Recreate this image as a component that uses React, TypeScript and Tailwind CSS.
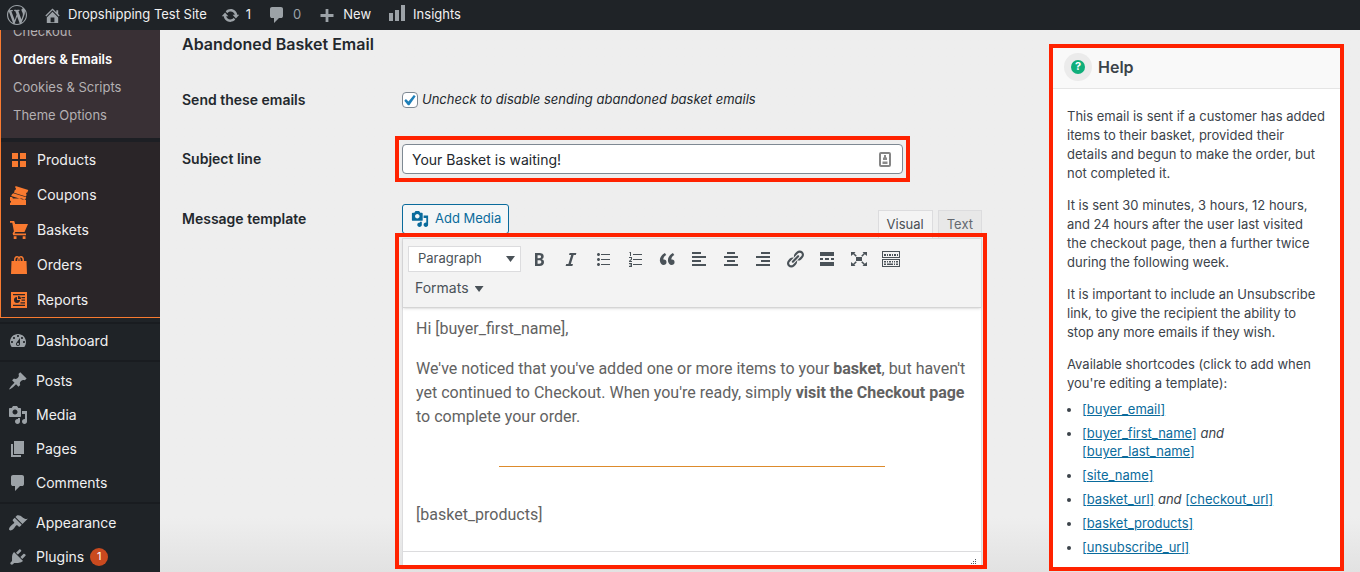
import type { ReactNode } from "react";
import clsx from "clsx";

const paths = {
  wordpress:
    "M20 10c0-5.51-4.49-10-10-10C4.48 0 0 4.49 0 10c0 5.52 4.48 10 10 10 5.51 0 10-4.48 10-10zM7.78 15.37L4.37 6.22c.55-.02 1.17-.08 1.17-.08.5-.06.44-1.13-.06-1.11 0 0-1.45.11-2.37.11-.18 0-.37 0-.58-.01C4.12 2.69 6.87 1.11 10 1.11c2.33 0 4.45.87 6.05 2.34-.68-.11-1.65.39-1.65 1.58 0 .74.45 1.36.9 2.1.35.61.55 1.36.55 2.46 0 1.49-1.4 5-1.4 5l-3.03-8.37c.54-.02.82-.17.82-.17.5-.05.44-1.25-.06-1.22 0 0-1.44.12-2.38.12-.87 0-2.33-.12-2.33-.12-.5-.03-.56 1.2-.06 1.22l.92.08 1.26 3.41zM17.41 10c.24-.64.74-1.87.43-4.25.7 1.29 1.05 2.71 1.05 4.25 0 3.29-1.73 6.24-4.4 7.78.97-2.59 1.94-5.2 2.92-7.78zM6.1 18.09C3.12 16.65 1.11 13.53 1.11 10c0-1.3.23-2.48.72-3.59C3.25 10.3 4.67 14.2 6.1 18.09zm4.03-6.63l2.58 6.98c-.86.29-1.76.45-2.71.45-.79 0-1.57-.11-2.29-.33.81-2.38 1.62-4.74 2.42-7.1z",
  home: "M16 8.5l1.53 1.53-1.06 1.06L10 4.6l-6.47 6.49-1.06-1.06L10 2.5l4 4v-2h2v4zm-6-2.46l6 5.99V18H4v-5.97zM12 17v-5H8v5h4z",
  update:
    "M10.2 3.28c3.53 0 6.43 2.61 6.92 6h2.08l-3.5 4-3.5-4h2.32c-.45-1.97-2.21-3.45-4.32-3.45-1.45 0-2.73.71-3.54 1.78L4.95 5.66C6.23 4.2 8.11 3.28 10.2 3.28zm-.4 13.44c-3.52 0-6.43-2.61-6.92-6H.8l3.5-4c1.17 1.33 2.33 2.67 3.5 4H5.48c.45 1.97 2.21 3.45 4.32 3.45 1.45 0 2.73-.71 3.54-1.78l1.71 1.95c-1.28 1.46-3.15 2.38-5.25 2.38z",
  comments:
    "M5 2h9q.82 0 1.41.59T16 4v7q0 .82-.59 1.41T14 13h-2l-5 5v-5H5q-.82 0-1.41-.59T3 11V4q0-.82.59-1.41T5 2z",
  plus: "M8.6 4h2.8v5.100h5.100v2.800h-5.100V17H8.600v-5.100H3.500V9.100h5.100z",
  bars: "M18 18V2h-4v16h4zm-6 0V7H8v11h4zm-6 0v-8H2v8h4z",
  dashboard:
    "M3.76 16h12.48c1.1-1.37 1.76-3.11 1.76-5 0-4.42-3.58-8-8-8s-8 3.58-8 8c0 1.89.66 3.63 1.76 5zM10 4c.55 0 1 .45 1 1s-.45 1-1 1-1-.45-1-1 .45-1 1-1zM6 6c.55 0 1 .45 1 1s-.45 1-1 1-1-.45-1-1 .45-1 1-1zm8 0c.55 0 1 .45 1 1s-.45 1-1 1-1-.45-1-1 .45-1 1-1zm-5.37 5.55L12 7v6c0 1.1-.9 2-2 2s-2-.9-2-2c0-.57.24-1.08.63-1.45zM4 10c.55 0 1 .45 1 1s-.45 1-1 1-1-.45-1-1 .45-1 1-1zm12 0c.55 0 1 .45 1 1s-.45 1-1 1-1-.45-1-1 .45-1 1-1zm-5 3c0-.55-.45-1-1-1s-1 .45-1 1 .45 1 1 1 1-.45 1-1z",
  post: "M10.44 3.02l1.82-1.82 6.36 6.35-1.83 1.82c-1.05-.68-2.48-.57-3.41.36l-.75.75c-.92.93-1.04 2.35-.35 3.41l-1.83 1.82-2.41-2.41-2.8 2.79c-.42.42-3.38 2.71-3.8 2.29s1.86-3.39 2.28-3.81l2.79-2.79L4.1 9.36l1.83-1.82c1.05.69 2.48.57 3.4-.36l.75-.75c.93-.92 1.05-2.35.36-3.41z",
  media:
    "M13 11V4c0-.55-.45-1-1-1h-1.67L9 1H5L3.67 3H2c-.55 0-1 .45-1 1v7c0 .55.45 1 1 1h10c.55 0 1-.45 1-1zM7 4.5c1.38 0 2.5 1.12 2.5 2.5S8.38 9.5 7 9.5 4.5 8.38 4.5 7 5.62 4.5 7 4.5zM14 6h5v10.5c0 1.38-1.12 2.5-2.5 2.5S14 17.88 14 16.5s1.12-2.5 2.5-2.5c.17 0 .34.02.5.05V9h-3V6zm-4 8.05V13h2v3.5c0 1.38-1.12 2.5-2.5 2.5S7 17.88 7 16.5 8.12 14 9.5 14c.17 0 .34.02.5.05z",
  page: "M6 15V2h10v13H6zm-1 1h8v2H3V5h2v11z",
  appearance:
    "M14.48 11.06L7.41 3.99l1.5-1.5c.5-.56 2.3-.47 3.51.32 1.21.8 1.43 1.28 2.91 2.1 1.18.64 2.45 1.26 4.45.85zm-.71.71L6.7 4.7 4.93 6.47c-.39.39-.39 1.02 0 1.41l1.06 1.06c.39.39.39 1.03 0 1.42-.6.6-1.43 1.11-2.21 1.69-.35.26-.7.53-1.01.84C1.43 14.23.4 16.08 1.4 17.07c.99 1 2.84-.03 4.18-1.36.31-.31.58-.66.85-1.02.57-.78 1.08-1.61 1.69-2.21.39-.39 1.02-.39 1.41 0l1.06 1.06c.39.39 1.02.39 1.41 0z",
  plugins:
    "M13.11 4.36L9.87 7.6 8 5.73l3.24-3.24c.35-.34 1.05-.2 1.56.32.52.51.66 1.21.31 1.55zm-8 1.77l.91-1.12 9.01 9.01-1.19.84c-.71.71-2.63 1.16-3.82 1.16H6.14L4.9 17.26c-.59.59-1.54.59-2.12 0-.59-.58-.59-1.53 0-2.12l1.24-1.24v-3.88c0-1.13.4-3.19 1.09-3.89zm7.26 3.97l3.24-3.24c.34-.35 1.04-.21 1.55.31.52.51.66 1.21.31 1.55l-3.24 3.25z",
  products: "M3 3h6v6H3zM11 3h6v6h-6zM3 11h6v6H3zM11 11h6v6h-6z",
  coupons:
    "M6.5 1l12.8 4-1 2.600-.9.100-.4 1.300.7.700-.8 1.800L5 7.700 5.800 5l.9-.3.300-1.200-.8-.9zM4.300 8.300l12.900 4-1 2.500H14.500L2.200 11.100 3 9.200zM1 12h2l1 1.500h9l2.500 1.500h1.500v5H1v-2l1-.7v-1L1 15.500z",
  cart: "M1 1h4.200l1 3H19l-3.500 8H6.300l-.8 1.600H17V15.200H4.200L3.600 13.500 4.900 11.300 3.300 2.800H1zM4.700 16.200h2.800V19H4.700zM13.700 16.200h2.800V19h-2.800z",
  orders:
    "M5 6V5c0-2.500 1.300-4 3-4 .8 0 1.500.3 2 .8.5-.5 1.200-.8 2-.8 1.700 0 3 1.500 3 4v1h2.500l.5 13H2L2.500 6zM6.500 6h1.700c0-1.600.3-2.500.8-3.300C7.300 2 6.500 3.200 6.500 5zM9.500 6h1c0-1.500-.1-2.200-.5-2.900-.4.700-.5 1.400-.5 2.900zM11.800 6h1.700V5c0-1.800-.9-3-2.500-2.300.5.800.8 1.700.8 3.300z",
  reports:
    "M2 2h16v16H2zM4 4v1.200h12V4zM4 14.800V16h12v-1.200zM8 7a3 3 0 1 0 3 3H8zM9 6v3h3a3 3 0 0 0-3-3zM12.500 7v1.200H16V7zM12.500 9.600v1.200H16V9.600zM11.500 12.200v1.200H16v-1.200z",
  bold: "M6 4v13h4.54c1.37 0 2.46-.33 3.26-1 .8-.66 1.2-1.58 1.2-2.77 0-.84-.17-1.51-.51-2.01s-.9-.85-1.67-1.03v-.09c.57-.1 1.02-.4 1.36-.9s.51-1.13.51-1.91c0-1.14-.39-1.98-1.17-2.5C12.75 4.26 11.5 4 9.78 4H6zm2.57 5.15V6.26h1.36c.73 0 1.27.11 1.61.32.34.22.51.58.51 1.07 0 .54-.16.92-.47 1.15s-.82.35-1.51.35h-1.5zm0 2.19h1.6c1.44 0 2.16.53 2.16 1.61 0 .6-.17 1.05-.51 1.34s-.86.43-1.57.43H8.57v-3.38z",
  italic: "M14.78 6h-2.13l-2.8 9h2.12l-.62 2H4.6l.62-2h2.14l2.8-9H8.03l.62-2h6.75z",
  bullets:
    "M5.5 7C4.67 7 4 6.33 4 5.5 4 4.68 4.67 4 5.5 4 6.32 4 7 4.68 7 5.5 7 6.33 6.32 7 5.5 7zM8 5h9v1H8V5zm-2.500 7c-.83 0-1.500-.67-1.500-1.500C4 9.680 4.670 9 5.500 9c.82 0 1.500.68 1.500 1.500 0 .83-.68 1.500-1.500 1.500zM8 10h9v1H8v-1zm-2.500 7c-.83 0-1.500-.67-1.500-1.500 0-.82.67-1.500 1.500-1.500.82 0 1.500.68 1.500 1.500 0 .83-.68 1.500-1.500 1.500zM8 15h9v1H8v-1z",
  numbers:
    "M5 3h1v4H5V4H4zM8 5h9v1H8zM4 8h3v2.500L5.300 12H7v1H4v-1l2-2V9H4zM8 10h9v1H8zM4 14h3v4H4v-1h2v-.6H4.600v-.8H6V15H4zM8 15h9v1H8z",
  quote:
    "M9.49 13.22c0-.74-.2-1.38-.61-1.9-.62-.78-1.83-.88-2.53-.72-.29-1.65 1.11-3.75 2.92-4.65L7.88 4c-2.73 1.3-5.42 4.28-4.96 8.05C3.21 14.43 4.59 16 6.54 16c.85 0 1.56-.25 2.12-.75s.83-1.18.83-2.03zm8.05 0c0-.74-.2-1.38-.61-1.9-.63-.78-1.83-.88-2.53-.72-.29-1.65 1.11-3.75 2.92-4.65L15.93 4c-2.73 1.3-5.41 4.28-4.95 8.05.29 2.38 1.66 3.95 3.61 3.95.85 0 1.56-.25 2.12-.75s.83-1.18.83-2.03z",
  alignLeft: "M12 5V3H3v2h9zm5 4V7H3v2h14zm-5 4v-2H3v2h9zm5 4v-2H3v2h14z",
  alignCenter: "M14 5V3H6v2h8zm3 4V7H3v2h14zm-3 4v-2H6v2h8zm3 4v-2H3v2h14z",
  alignRight: "M17 5V3H8v2h9zm0 4V7H3v2h14zm0 4v-2H8v2h9zm0 4v-2H3v2h14z",
  link: "M17.74 2.76c1.68 1.69 1.68 4.41 0 6.1l-1.53 1.52c-1.12 1.12-2.7 1.47-4.14 1.09l2.62-2.61.76-.77.76-.76c.84-.84.84-2.2 0-3.04-.84-.85-2.2-.85-3.04 0l-.77.76-3.38 3.38c-.37-1.44-.02-3.02 1.1-4.14l1.52-1.53c1.69-1.68 4.42-1.68 6.1 0zM8.59 13.43l5.34-5.34c.42-.42.42-1.1 0-1.52-.44-.43-1.13-.39-1.53 0l-5.33 5.34c-.42.42-.42 1.1 0 1.52.44.43 1.13.39 1.52 0zm-.76 2.29l4.14-4.15c.38 1.44.03 3.02-1.09 4.14l-1.52 1.53c-1.69 1.68-4.41 1.68-6.1 0-1.68-1.68-1.68-4.42 0-6.1l1.53-1.52c1.12-1.12 2.7-1.47 4.14-1.1l-4.14 4.15c-.85.84-.85 2.2 0 3.05.84.84 2.2.84 3.04 0z",
  more: "M3 3h14v4H3zM3 9h3v2H3zM8 9h4v2H8zM14 9h3v2h-3zM3 13h14v4H3z",
  fullscreen:
    "M7 8h6v4H7zM2 3h4.500L5.300 4.200 7.800 6.700 6.700 7.800 4.200 5.300 2 7zM18 3v4l-2.200-1.700-2.500 2.500-1.100-1.100 2.500-2.500L13.500 3zM2 17v-4l2.200 1.700 2.500-2.500 1.100 1.100-2.500 2.500L6.500 17zM18 17h-4.500l1.200-1.200-2.500-2.500 1.100-1.100 2.500 2.500L18 13z",
  keyboard:
    "M1 2h18v7H1zM2 3v5h16V3zM3 5h2v2H3zM6 5h1v2H6zM8 5h2v2H8zM11 5h1v2h-1zM13 5h2v2h-2zM16 5h1v2h-1zM1 10h18v8H1zM2 11v6h16v-6zM3 12h2v1.500H3zM6 12h1v1.500H6zM8 12h2v1.500H8zM11 12h1v1.500h-1zM13 12h1v1.500h-1zM15 12h2v1.500h-2zM3 14.500h2V16H3zM6 14.500h6V16H6zM13 14.500h1V16h-1zM15 14.500h2V16h-2z",
};

type IconName = keyof typeof paths;

function Icon({ name, className = "size-5" }: { name: IconName; className?: string }) {
  return (
    <svg
      viewBox="0 0 20 20"
      fill="currentColor"
      fillRule="evenodd"
      aria-hidden="true"
      className={clsx("shrink-0", className)}
    >
      <path d={paths[name]} />
    </svg>
  );
}

const shopMenu: { label: string; icon: IconName }[] = [
  { label: "Products", icon: "products" },
  { label: "Coupons", icon: "coupons" },
  { label: "Baskets", icon: "cart" },
  { label: "Orders", icon: "orders" },
  { label: "Reports", icon: "reports" },
];

const adminMenu: { label: string; icon: IconName; count?: number }[][] = [
  [{ label: "Dashboard", icon: "dashboard" }],
  [
    { label: "Posts", icon: "post" },
    { label: "Media", icon: "media" },
    { label: "Pages", icon: "page" },
    { label: "Comments", icon: "comments" },
  ],
  [
    { label: "Appearance", icon: "appearance" },
    { label: "Plugins", icon: "plugins", count: 1 },
  ],
];

const tools: { label: string; icon: IconName }[] = [
  { label: "Bold", icon: "bold" },
  { label: "Italic", icon: "italic" },
  { label: "Bulleted list", icon: "bullets" },
  { label: "Numbered list", icon: "numbers" },
  { label: "Blockquote", icon: "quote" },
  { label: "Align left", icon: "alignLeft" },
  { label: "Align center", icon: "alignCenter" },
  { label: "Align right", icon: "alignRight" },
  { label: "Insert link", icon: "link" },
  { label: "Read more tag", icon: "more" },
  { label: "Fullscreen", icon: "fullscreen" },
  { label: "Toolbar toggle", icon: "keyboard" },
];

// red outline laid over the element it points out
function Highlight({ className }: { className: string }) {
  return <div className={clsx("pointer-events-none absolute border-4 border-[#ff2200]", className)} />;
}

function AdminBar() {
  return (
    <header className="relative z-10 flex h-[30px] shrink-0 items-center bg-[#1f2327] pl-[7px] text-[13px] text-[#f0f0f1]">
      <a href="#" aria-label="About WordPress" className="mr-4 text-[#9ca2a7]">
        <Icon name="wordpress" />
      </a>
      <a href="#" className="mr-3.5 flex items-center gap-1.5">
        <Icon name="home" className="size-[19px] text-[#9ca2a7]" />
        Dropshipping Test Site
      </a>
      <a href="#" className="mr-4 flex items-center gap-1.5">
        <Icon name="update" className="size-[19px] text-[#9ca2a7]" />1
      </a>
      <a href="#" className="mr-4 flex items-center gap-1.5 text-[#9ca2a7]">
        <Icon name="comments" />0
      </a>
      <a href="#" className="mr-4 flex items-center gap-1.5">
        <Icon name="plus" className="size-5 text-[#9ca2a7]" />
        New
      </a>
      <a href="#" className="flex items-center gap-1.5">
        <Icon name="bars" className="mb-1 size-5 text-[#9ca2a7]" />
        Insights
      </a>
    </header>
  );
}

function Sidebar() {
  return (
    <nav className="w-40 shrink-0 overflow-hidden bg-[#1f2327] text-sm text-[#f0f0f1]">
      <div className="border-b border-l border-[#f97a30] bg-[#2a2528]">
        <ul className="-mt-[13px] bg-[#393035] pb-[9px] pl-3 text-[13px] leading-7 text-[#b4b0b3]">
          <li>
            <a href="#">Checkout</a>
          </li>
          <li>
            <a href="#" className="font-semibold text-white">
              Orders &amp; Emails
            </a>
          </li>
          <li>
            <a href="#">Cookies &amp; Scripts</a>
          </li>
          <li>
            <a href="#">Theme Options</a>
          </li>
        </ul>
        <ul className="border-t-4 border-[#1d1f24]">
          {shopMenu.map((item) => (
            <li key={item.label}>
              <a href="#" className="flex h-[35px] items-center gap-2 pl-2">
                <Icon name={item.icon} className="size-5 text-[#f97a30]" />
                {item.label}
              </a>
            </li>
          ))}
        </ul>
      </div>
      <div className="h-1.5 border-b-2 border-[#191c20]" />
      {adminMenu.map((group, i) => (
        <ul key={i} className={clsx(i > 0 && "mt-0.5 border-t-2 border-[#191c20] pt-0.5")}>
          {group.map((item) => (
            <li key={item.label}>
              <a href="#" className="flex h-[34px] items-center gap-2 pl-2">
                <Icon name={item.icon} className="size-5 text-[#9ca2a7]" />
                {item.label}
                {item.count && (
                  <span className="-ml-0.5 flex size-[18px] items-center justify-center rounded-full bg-[#ca4a1f] text-[11px] text-white">
                    {item.count}
                  </span>
                )}
              </a>
            </li>
          ))}
        </ul>
      ))}
    </nav>
  );
}

function Toolbar() {
  return (
    <div className="border-b border-[#d5d5d5] bg-[#f3f3f3] px-[5px] pb-1 pt-[7px] text-[#4a5258] shadow-sm">
      <div className="flex items-center">
        <div className="relative mr-2">
          <select
            aria-label="Block format"
            className="block h-[26px] w-[113px] appearance-none border border-[#dcdcde] bg-white pl-[9px] text-[13px]"
          >
            <option>Paragraph</option>
          </select>
          <span className="pointer-events-none absolute right-1.5 top-2.5 h-1.5 w-[9px] bg-current [clip-path:polygon(0_0,100%_0,50%_100%)]" />
        </div>
        {tools.map((tool) => (
          <button key={tool.label} type="button" aria-label={tool.label} className="mr-3 last:mr-0">
            <Icon name={tool.icon} />
          </button>
        ))}
      </div>
      <button type="button" className="mt-px flex h-[30px] items-center gap-1.5 pl-[7px] text-sm">
        Formats
        <span className="mt-0.5 h-1.5 w-[9px] bg-current [clip-path:polygon(0_0,100%_0,50%_100%)]" />
      </button>
    </div>
  );
}

function Editor() {
  return (
    <div>
      <div className="flex items-end justify-between">
        <button
          type="button"
          className="flex h-[30px] items-center gap-1.5 self-start rounded-[3px] border border-[#0a6b9c] bg-[#f4f6f7] pl-2 pr-[7px] text-[13px] text-[#0a6b9c]"
        >
          <Icon name="media" className="size-[18px]" />
          Add Media
        </button>
        <div className="mt-1.5 flex gap-[5px] text-[13px] text-[#4a4f54]">
          <button type="button" className="h-7 border border-b-0 border-[#dcdcde] bg-[#f4f4f4] px-2">
            Visual
          </button>
          <button type="button" className="h-7 border border-b-0 border-[#dcdcde] bg-[#e8e8e8] px-2 text-[#646970]">
            Text
          </button>
        </div>
      </div>
      <div className="relative border border-[#dcdcde] bg-white">
        <Toolbar />
        <div
          role="textbox"
          aria-label="Message template"
          className="flex h-[243px] flex-col gap-4 px-[13px] pt-[9px] font-[Roboto,sans-serif] text-base text-[#626262]"
        >
          <p>Hi [buyer_first_name],</p>
          <p>
            We've noticed that you've added one or more items to your <b>basket</b>, but haven't yet
            continued to Checkout. When you're ready, simply <b>visit the Checkout page</b> to complete
            your order.
          </p>
          <hr className="mb-5 mt-[21px] w-[386px] self-center border-[#dd8b2c]" />
          <p>[basket_products]</p>
        </div>
        <div className="flex h-[18px] items-end justify-end border-t border-[#dcdcde] p-1">
          <svg viewBox="0 0 6 6" fill="#50575e" className="size-1.5" aria-hidden="true">
            <path d="M4 0h1v1H4zM2 2h1v1H2zM4 2h1v1H4zM0 4h1v1H0zM2 4h1v1H2zM4 4h1v1H4z" />
          </svg>
        </div>
        <Highlight className="-left-2 -right-1.5 -top-1.5 bottom-0" />
      </div>
    </div>
  );
}

function Field({ label, htmlFor, children }: { label: string; htmlFor?: string; children: ReactNode }) {
  return (
    <div className="flex min-h-[29px]">
      <label htmlFor={htmlFor} className="w-[220px] shrink-0 pt-1 text-sm font-semibold leading-[22px]">
        {label}
      </label>
      <div className="min-w-0 flex-1">{children}</div>
    </div>
  );
}

function Code({ name }: { name: string }) {
  return (
    <a href="#" className="text-[#0a6b9c] underline">
      [{name}]
    </a>
  );
}

function Help() {
  return (
    <aside className="relative w-[287px] shrink-0 bg-white text-[13px] leading-[19px] text-[#3c434a]">
      <h2 className="flex h-[41px] items-center gap-1.5 border-b border-[#e5e5e5] bg-[#f9f9f9] pb-[3px] pl-[11px] text-base font-semibold">
        <span className="flex size-7 items-center justify-center rounded-full bg-[#ebebeb]">
          <span className="flex size-3.5 items-center justify-center rounded-full bg-[#0fae7a] text-[11px] font-bold text-white">
            ?
          </span>
        </span>
        Help
      </h2>
      <div className="space-y-[13px] pb-[13px] pl-3.5 pr-3 pt-[18px]">
        <p>
          This email is sent if a customer has added items to their basket, provided their details and
          begun to make the order, but not completed it.
        </p>
        <p>
          It is sent 30 minutes, 3 hours, 12 hours, and 24 hours after the user last visited
          the&nbsp;checkout page, then a further twice during the following week.
        </p>
        <p>
          It is important to include an Unsubscribe link, to give the recipient the ability to
          stop&nbsp;any more emails if they wish.
        </p>
        <div>
          <p>Available shortcodes (click to add when you're editing a template):</p>
          <ul className="mt-[7px] list-disc space-y-1.5 pl-[15px] leading-[18px]">
            <li>
              <Code name="buyer_email" />
            </li>
            <li>
              <Code name="buyer_first_name" /> <em>and</em> <Code name="buyer_last_name" />
            </li>
            <li>
              <Code name="site_name" />
            </li>
            <li>
              <Code name="basket_url" /> <em>and</em> <Code name="checkout_url" />
            </li>
            <li>
              <Code name="basket_products" />
            </li>
            <li>
              <Code name="unsubscribe_url" />
            </li>
          </ul>
        </div>
      </div>
      <Highlight className="-bottom-0.5 -left-1 -right-1 -top-1" />
    </aside>
  );
}

export default function App() {
  return (
    <div className="flex h-screen flex-col overflow-hidden font-[Inter,sans-serif]">
      <AdminBar />
      <div className="flex min-h-0 flex-1">
        <Sidebar />
        <main className="flex min-w-0 flex-1 items-start gap-[71px] overflow-hidden bg-gradient-to-b from-[#eeeeee] from-90% to-[#e2e2e2] pl-[22px] pr-5 text-[#23282d]">
          <form className="min-w-0 flex-1">
            <h1 className="pt-0.5 text-base font-semibold leading-6">Abandoned Basket Email</h1>
            <div className="mt-[29px] flex flex-col gap-[30px]">
              <Field label="Send these emails" htmlFor="send">
                <div className="flex items-center gap-1 pt-[5px] text-[13px]">
                  <span className="relative flex">
                    <input
                      id="send"
                      type="checkbox"
                      defaultChecked
                      className="peer size-4 appearance-none rounded border border-[#7e8993] bg-white"
                    />
                    <svg
                      viewBox="3 1 16 16"
                      fill="#1e7fb8"
                      className="pointer-events-none absolute inset-0 hidden size-4 peer-checked:block"
                      aria-hidden="true"
                    >
                      <path d="M14.830 3.890l1.840 1.240-6.310 9.080H9.020L5.280 9.670l1.640-1.550 2.570 2.400z" />
                    </svg>
                  </span>
                  <label htmlFor="send" className="italic">
                    Uncheck to disable sending abandoned basket emails
                  </label>
                </div>
              </Field>
              <Field label="Subject line" htmlFor="subject">
                <div className="relative w-[501px]">
                  <input
                    id="subject"
                    type="text"
                    defaultValue="Your Basket is waiting!"
                    className="block h-[30px] w-full rounded border border-[#7e8993] bg-white px-[9px] text-sm"
                  />
                  <svg viewBox="0 0 12 16" className="absolute right-3 top-2 h-4 w-3" aria-hidden="true">
                    <rect x="1" y="1" width="10" height="13" rx="1" fill="#fff" stroke="#858585" strokeWidth="2" />
                    <path d="M5 3h2v2l1 1v2H4V6l1-1zM3.500 9.500h5V12h-5z" fill="#8a8a8a" />
                  </svg>
                  <Highlight className="-inset-x-[7px] -inset-y-2" />
                </div>
              </Field>
              <Field label="Message template">
                <Editor />
              </Field>
            </div>
          </form>
          <div className="shrink-0 pt-[18px]">
            <Help />
          </div>
        </main>
      </div>
    </div>
  );
}
